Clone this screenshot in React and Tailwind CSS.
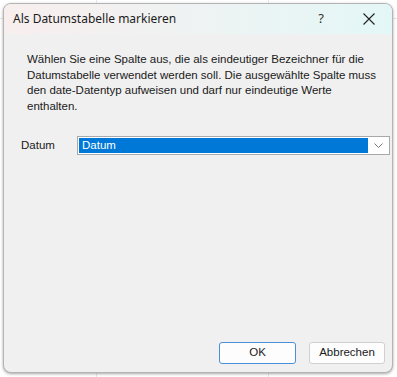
export default function App() {
  return (
    <div className="relative w-[397px] h-[377px] bg-white overflow-hidden">
      {/* spreadsheet lines behind the dialog */}
      <div className="absolute left-0 top-[18px] w-full border-t border-gray-200" />
      <div className="absolute left-[96px] top-0 h-full border-l border-gray-200" />
      <div className="absolute left-[268px] top-0 h-full border-l border-gray-200" />

      <div className="absolute left-[3px] top-[3px] w-[390px] h-[370px] flex flex-col rounded-lg border border-[#b4b4b4] bg-[#f0f0f0] shadow-[0_1px_3px_rgba(0,0,0,0.35)] overflow-hidden">
        <div
          className="h-[30px] shrink-0 flex items-center pl-[9px] bg-gradient-to-r from-[#f8eeee] to-[#e4f7f7]"
          style={{ fontFamily: '"Noto Sans", sans-serif' }}
        >
          <span className="flex-1 text-[12px] text-[#1b1b1b]">Als Datumstabelle markieren</span>
          <span className="w-[46px] text-center text-[13px] text-[#333] mr-[2px]">?</span>
          <span className="w-[46px] flex justify-center">
            <svg width="12" height="12" viewBox="0 0 12 12" fill="none" stroke="#222" strokeWidth="1.1">
              <path d="M0.5 0.5 L11.5 11.5 M11.5 0.5 L0.5 11.5" />
            </svg>
          </span>
        </div>

        <div
          className="flex-1 flex flex-col px-[23px] pt-[18px]"
          style={{ fontFamily: '"Liberation Sans", Arial, sans-serif' }}
        >
          <p className="text-[11.5px] leading-[15.5px] text-[#1a1a1a] -mr-[8px]">
            Wählen Sie eine Spalte aus, die als eindeutiger Bezeichner für die Datumstabelle verwendet werden soll. Die ausgewählte Spalte muss den date-Datentyp aufweisen und darf nur eindeutige Werte enthalten.
          </p>

          <div className="flex items-center mt-[22px] -ml-[6px]">
            <span className="w-[56px] text-[11.5px] text-[#1a1a1a]">Datum</span>
            <div className="flex-1 h-[19px] flex items-center border border-[#a9a9a9] bg-white p-px -mr-[21px]">
              <div className="flex-1 h-full bg-[#0078d7] text-white text-[11.5px] leading-[15px] pl-[3px]">
                Datum
              </div>
              <div className="w-[20px] flex justify-center">
                <svg width="9" height="6" viewBox="0 0 9 6" fill="none" stroke="#777" strokeWidth="1">
                  <path d="M0.5 0.5 L4.5 4.5 L8.5 0.5" />
                </svg>
              </div>
            </div>
          </div>

          <div className="mt-auto mb-[8px] flex justify-end gap-[13px] -mr-[16px]">
            <button className="w-[77px] h-[22px] rounded-[3px] border border-[#4a90d9] bg-[#fdfdfd] text-[11.5px] text-[#1a1a1a]">
              OK
            </button>
            <button className="w-[76px] h-[22px] rounded-[3px] border border-[#d0d0d0] bg-[#fdfdfd] text-[11.5px] text-[#1a1a1a]">
              Abbrechen
            </button>
          </div>
        </div>
      </div>
    </div>
  );
}
